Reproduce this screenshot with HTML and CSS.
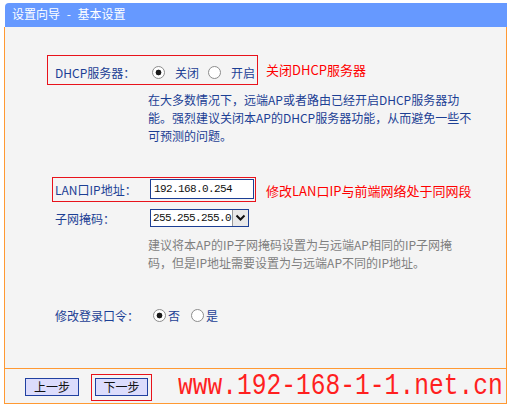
FILE: index.html
```html
<!DOCTYPE html>
<html lang="zh-CN">
<head>
<meta charset="utf-8">
<title>设置向导 - 基本设置</title>
<link rel="stylesheet" href="styles.css">
</head>
<body>
<div class="wrap">
  <div class="title">设置向导 - 基本设置</div>
  <div class="panel">
    <div class="row row-dhcp">
      <div class="hl hl-dhcp">
        <span class="label">DHCP服务器：</span>
        <label class="opt"><input type="radio" name="dhcp" checked><span>关闭</span></label>
        <label class="opt"><input type="radio" name="dhcp"><span>开启</span></label>
      </div>
      <span class="note">关闭DHCP服务器</span>
    </div>
    <p class="desc">在大多数情况下，远端AP或者路由已经开启DHCP服务器功<br>能。强烈建议关闭本AP的DHCP服务器功能，从而避免一些不<br>可预测的问题。</p>
    <div class="row row-lan">
      <div class="hl hl-lan">
        <span class="label label-lan">LAN口IP地址：</span>
        <input class="ip" type="text" value="192.168.0.254">
      </div>
      <span class="note note-lan">修改LAN口IP与前端网络处于同网段</span>
    </div>
    <div class="row row-mask">
      <span class="label label-lan">子网掩码：</span>
      <div class="select">
        <span class="val">255.255.255.0</span>
        <span class="drop"><svg width="11" height="8" viewBox="0 0 11 8"><path d="M1.5 1.5 L5.5 5.5 L9.5 1.5" fill="none" stroke="#111" stroke-width="2"/></svg></span>
      </div>
    </div>
    <p class="desc desc-gray">建议将本AP的IP子网掩码设置为与远端AP相同的IP子网掩<br>码，但是IP地址需要设置为与远端AP不同的IP地址。</p>
    <div class="row row-pwd">
      <span class="label label-pwd">修改登录口令：</span>
      <label class="opt opt-tight"><input type="radio" name="pwd" checked><span>否</span></label>
      <label class="opt opt-tight"><input type="radio" name="pwd"><span>是</span></label>
    </div>
  </div>
  <div class="footer">
    <button class="btn" type="button">上一步</button>
    <div class="hl-next"><button class="btn" type="button">下一步</button></div>
  </div>
  <div class="watermark">www.192-168-1-1.net.cn</div>
</div>
</body>
</html>
```

FILE: styles.css
```css
html, body {
  margin: 0;
  padding: 0;
  background: #ffffff;
}
body {
  font-family: "Noto Sans CJK SC", "Liberation Sans", sans-serif;
  font-size: 12px;
  color: #1c3f94;
}
.wrap {
  position: relative;
  width: 503px;
  padding: 3px 0 0 4px;
}
.title {
  margin-left: 1px;
  height: 24px;
  line-height: 22px;
  padding-left: 7px;
  background: #6699ff;
  color: #ffffff;
  font-size: 12px;
  word-spacing: 4px;
  border-top-left-radius: 4px;
}
.panel {
  height: 341px;
  background: #f4f4f4;
  border-left: 1px solid #ff9933;
  border-right: 1px solid #ff9933;
  box-sizing: border-box;
  display: flex;
  flex-direction: column;
  align-items: flex-start;
}
.row {
  display: flex;
  align-items: center;
}
.hl {
  display: flex;
  align-items: center;
  border: 1px solid #e8121b;
  box-sizing: border-box;
}
.row-dhcp {
  margin-top: 28px;
  margin-left: 42px;
}
.hl-dhcp {
  width: 211px;
  height: 30px;
  padding: 4px 0 0 7px;
}
.label {
  width: 97px;
  flex: none;
  white-space: nowrap;
}
.label-lan {
  width: 95px;
}
.label-pwd {
  width: 98px;
}
.note {
  color: #ff0000;
  font-size: 13px;
  margin-left: 8px;
  margin-top: -1px;
  white-space: nowrap;
}
.note-lan {
  margin-left: 10px;
  margin-top: 1px;
}
.opt {
  display: flex;
  align-items: center;
  flex: none;
  white-space: nowrap;
  margin-right: 9px;
}
.opt:last-child {
  margin-right: 0;
}
.opt span {
  margin-left: 10px;
}
.opt-tight {
  margin-right: 11px;
}
.opt-tight span {
  margin-left: 2px;
}
.opt input {
  appearance: none;
  -webkit-appearance: none;
  margin: 0;
  width: 13px;
  height: 13px;
  border: 1px solid #8c8c8c;
  border-radius: 50%;
  background: #ffffff;
  box-sizing: border-box;
}
.opt input:checked {
  background: radial-gradient(circle, #1a1a1a 0 2.6px, #ffffff 3.2px);
}
.desc {
  margin: 6px 0 0 143px;
  line-height: 18px;
  white-space: nowrap;
}
.desc-gray {
  margin-top: 9px;
  color: #7f7f7f;
}
.row-lan {
  margin-top: 32px;
  margin-left: 47px;
}
.hl-lan {
  width: 204px;
  height: 25px;
  padding: 0 1px 1px 2px;
}
.ip {
  width: 104px;
  height: 20px;
  box-sizing: border-box;
  border: 1px solid #1c3f94;
  background: #ffffff;
  padding: 0 0 0 3px;
  margin: 0;
  font-family: "Liberation Mono", monospace;
  font-size: 11px;
  letter-spacing: -0.6px;
  color: #111111;
  outline: none;
}
.row-mask {
  margin-top: 7px;
  margin-left: 50px;
}
.select {
  display: flex;
  width: 99px;
  height: 18px;
  box-sizing: border-box;
  border: 1px solid #1c3f94;
  background: #ffffff;
}
.val {
  flex: 1;
  padding-left: 2px;
  font-family: "Liberation Mono", monospace;
  font-size: 11px;
  letter-spacing: -0.6px;
  line-height: 16px;
  color: #111111;
}
.drop {
  width: 15px;
  display: flex;
  align-items: center;
  justify-content: center;
  background: #e9e9e9;
  border-left: 1px solid #9a9a9a;
}
.row-pwd {
  margin-top: 34px;
  margin-left: 50px;
  height: 18px;
}
.footer {
  height: 36px;
  box-sizing: border-box;
  border: 1px solid #ff9933;
  background: #f4f4f4;
  display: flex;
  align-items: flex-start;
  padding: 9px 0 0 20px;
}
.btn {
  width: 54px;
  height: 18px;
  box-sizing: border-box;
  margin: 0;
  padding: 0;
  border: 1px solid #2040a0;
  background: #dcdcfc;
  font-family: "Noto Sans CJK SC", sans-serif;
  font-size: 12px;
  line-height: 16px;
  color: #111111;
}
.hl-next {
  margin: -4px 0 0 12px;
  padding: 3px 3px 4px 3px;
  border: 1px solid #e8121b;
  display: flex;
}
.hl-next .btn {
  width: 53px;
}
.watermark {
  position: absolute;
  left: 178px;
  top: 376px;
  font-family: "Liberation Mono", "Courier New", monospace;
  font-size: 24.6px;
  line-height: 28px;
  color: #ff1f1f;
  transform: scaleY(1.2);
  transform-origin: left bottom;
  white-space: nowrap;
}
```
